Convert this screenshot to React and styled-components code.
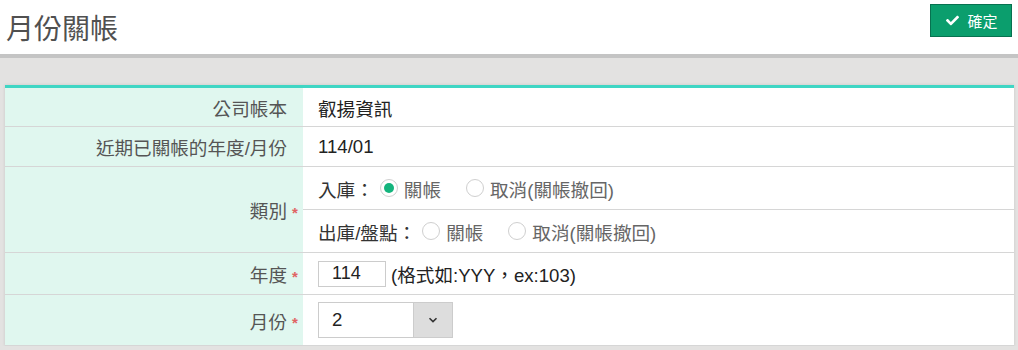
import { createGlobalStyle, styled } from "styled-components";
import { FaCheck } from "react-icons/fa";

const GlobalStyle = createGlobalStyle`
  html, body {
    margin: 0;
    padding: 0;
    background: #e3e2e1;
    font-family: "Liberation Sans", "Noto Sans CJK TC", sans-serif;
  }
  * { box-sizing: border-box; }
`;

const App = () => {
  return (
    <>
      <GlobalStyle />
      <Header>
        <Title>月份關帳</Title>
        <ConfirmButton type="button">
          <FaCheck size={13} />
          確定
        </ConfirmButton>
      </Header>
      <Page>
        <Panel>
          <Label h={38}>
            <LabelText>公司帳本</LabelText>
          </Label>
          <Value h={38}>叡揚資訊</Value>

          <Label h={39}>
            <LabelText>近期已關帳的年度/月份</LabelText>
          </Label>
          <Value h={39}>114/01</Value>

          <Label h={85}>
            <LabelText required>類別</LabelText>
          </Label>
          <Value h={85} stack>
            <SubRow>
              <Prefix>入庫：</Prefix>
              <RadioItem>
                <Radio type="radio" name="in" defaultChecked />
                關帳
              </RadioItem>
              <RadioItem>
                <Radio type="radio" name="in" />
                取消(關帳撤回)
              </RadioItem>
            </SubRow>
            <SubRow last>
              <Prefix>出庫/盤點：</Prefix>
              <RadioItem>
                <Radio type="radio" name="out" />
                關帳
              </RadioItem>
              <RadioItem>
                <Radio type="radio" name="out" />
                取消(關帳撤回)
              </RadioItem>
            </SubRow>
          </Value>

          <Label h={41}>
            <LabelText required>年度</LabelText>
          </Label>
          <Value h={41}>
            <YearInput defaultValue="114" />
            <Hint>(格式如:YYY，ex:103)</Hint>
          </Value>

          <Label h={50}>
            <LabelText required>月份</LabelText>
          </Label>
          <Value h={50}>
            <Select>
              <SelectText>2</SelectText>
              <SelectToggle>
                <svg width="10" height="6" viewBox="0 0 10 6" fill="none">
                  <path d="M1.5 1.2 L5 4.6 L8.5 1.2" stroke="#333" strokeWidth="1.6" />
                </svg>
              </SelectToggle>
            </Select>
          </Value>
        </Panel>
      </Page>
    </>
  );
};

const Header = styled.header`
  height: 58px;
  background: #fff;
  border-bottom: 4px solid #c4c4c4;
  display: flex;
  justify-content: space-between;
  align-items: flex-start;
  padding: 0 6px 0 6px;
`;

const Title = styled.h1`
  margin: 14px 0 0;
  font-size: 28px;
  line-height: 32px;
  font-weight: normal;
  color: #505050;
`;

const ConfirmButton = styled.button`
  margin-top: 4px;
  width: 82px;
  height: 33px;
  display: flex;
  align-items: center;
  justify-content: center;
  gap: 8px;
  background: #0b9e6d;
  border: 1px solid #077250;
  color: #fff;
  font-family: inherit;
  font-size: 15px;
  padding: 0 0 0 2px;
  cursor: pointer;
`;

const Page = styled.main`
  padding: 27px 4px 0 5px;
`;

const Panel = styled.section`
  display: grid;
  grid-template-columns: 298px 1fr;
  background: #fff;
  border-top: 3px solid #3fd6c4;
  box-shadow: 0 0 3px rgba(0, 0, 0, 0.12);
`;

const Label = styled.div`
  height: ${(p) => p.h + 1}px;
  background: #e0f7ef;
  border-bottom: 1px solid #d6d6d6;
  display: flex;
  align-items: center;
  justify-content: flex-end;
  padding-right: 16px;
  color: #555;
  font-size: 18.6px;
`;

const LabelText = styled.span`
  position: relative;
  &::after {
    content: ${(p) => (p.required ? '"*"' : "none")};
    position: absolute;
    left: calc(100% + 5px);
    top: 50%;
    margin-top: -5px;
    line-height: 1;
    color: #e06464;
    font-size: 15px;
    font-weight: bold;
  }
`;

const Value = styled.div`
  height: ${(p) => p.h + 1}px;
  border-bottom: 1px solid #d6d6d6;
  display: flex;
  flex-direction: ${(p) => (p.stack ? "column" : "row")};
  align-items: ${(p) => (p.stack ? "stretch" : "center")};
  padding-left: ${(p) => (p.stack ? 0 : 15)}px;
  color: #222;
  font-size: 18.6px;
`;

const SubRow = styled.div`
  flex: 1;
  display: flex;
  align-items: center;
  padding-left: 15px;
  border-bottom: ${(p) => (p.last ? "none" : "1px solid #d6d6d6")};
`;

const Prefix = styled.span`
  color: #333;
  margin-right: 6px;
`;

const RadioItem = styled.label`
  display: flex;
  align-items: center;
  gap: 6px;
  color: #666;
  margin-right: 25px;
`;

const Radio = styled.input`
  appearance: none;
  margin: 0;
  width: 18px;
  height: 18px;
  border-radius: 50%;
  border: 1px solid #cfcfcf;
  background: #fff;
  display: grid;
  place-items: center;
  &:checked::before {
    content: "";
    width: 10px;
    height: 10px;
    border-radius: 50%;
    background: #14b47d;
  }
`;

const YearInput = styled.input`
  width: 68px;
  height: 26px;
  border: 1px solid #cccccc;
  padding: 0 0 0 13px;
  font-family: inherit;
  font-size: 18px;
  color: #222;
  outline: none;
`;

const Hint = styled.span`
  margin-left: 5px;
  color: #222;
`;

const Select = styled.div`
  width: 135px;
  height: 36px;
  border: 1px solid #cccccc;
  display: flex;
`;

const SelectText = styled.span`
  flex: 1;
  display: flex;
  align-items: center;
  padding-left: 13px;
  color: #222;
`;

const SelectToggle = styled.span`
  width: 39px;
  background: #dddddd;
  border-left: 1px solid #cccccc;
  display: flex;
  align-items: center;
  justify-content: center;
`;

export default App;
